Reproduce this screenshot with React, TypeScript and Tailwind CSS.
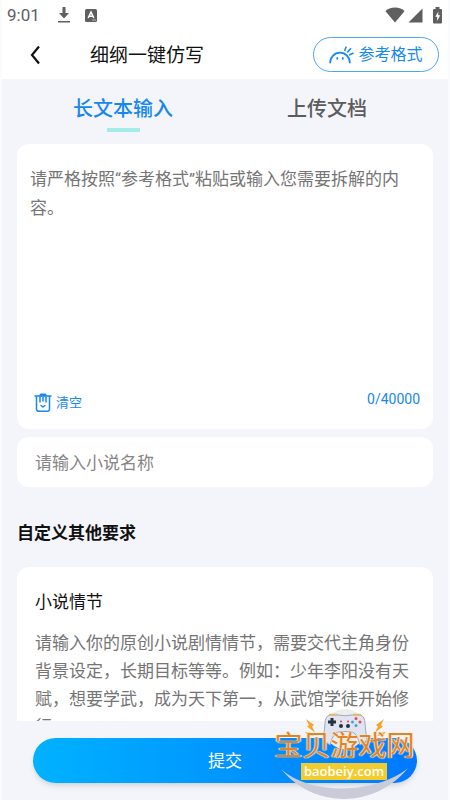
import React from 'react';

interface TabItem {
    id: string;
    label: string;
}

const tabs: TabItem[] = [
    { id: 'text', label: '长文本输入' },
    { id: 'file', label: '上传文档' },
];

const MAX_LENGTH = 40000;

const StatusBar = () => (
    <div className="flex h-[30px] items-center justify-between bg-white pl-[5px] pr-1.5 text-[#5f5f5f]">
        <div className="flex items-center">
            <span className="w-[50px] text-[17px] leading-[30px]">9:01</span>
            <svg width="14" height="18" viewBox="0 0 14 18" className="mr-3.5" fill="currentColor">
                <path d="M5.500 1h3v6h3.500L7 12.500 2 7h3.500z" />
                <path d="M1 15h12v1.500H1z" />
            </svg>
            <svg width="12" height="14" viewBox="0 0 12 14">
                <rect width="12" height="13" y="1" rx="1.500" fill="currentColor" />
                <path d="M3.200 10 6 4l2.800 6M4.200 8.300h3.600" fill="none" stroke="#fff" strokeWidth="1.500" />
                <path d="M7 12h4" stroke="#bbb" />
            </svg>
        </div>
        <div className="flex items-center">
            <svg width="20" height="16" viewBox="0 0 20 16" className="mr-[3px]" fill="currentColor">
                <path d="M.5 4.200C2.500 1.700 6 .5 10 .5s7.500 1.200 9.500 3.700L10 15.500z" />
            </svg>
            <svg width="15" height="15" viewBox="0 0 15 15" className="mr-2.5" fill="currentColor">
                <path d="M14.500.5v14H.5z" />
            </svg>
            <svg width="9" height="17" viewBox="0 0 9 17">
                <path d="M2.500 0h4v2H8a1 1 0 0 1 1 1v12.500a1 1 0 0 1-1 1H1a1 1 0 0 1-1-1V3a1 1 0 0 1 1-1h1.500z" fill="currentColor" />
                <path d="M5.300 4.500 2.300 9.800h1.900V14l3-5.700H5.300z" fill="#fff" />
            </svg>
        </div>
    </div>
);

const SunriseIcon = () => (
    <svg width="25" height="18" viewBox="0 0 25 18" className="shrink-0" fill="none" stroke="currentColor" strokeWidth="1.800" strokeLinecap="round">
        <path d="M1.200 16.500a9.800 9.800 0 0 1 19.600 0" />
        <path d="M15.800 4.200 17 1.200M18.600 6 21.600 2.800M20.800 8.800l3.200-1.500" strokeWidth="1.600" />
        <path d="M8.300 12v.8M13.800 12v.8" />
    </svg>
);

const TrashIcon = () => (
    <svg width="18" height="20" viewBox="0 0 18 20" className="shrink-0" fill="none" stroke="currentColor" strokeWidth="1.500" strokeLinecap="round" strokeLinejoin="round">
        <path d="M1 3h16" />
        <path d="M6 2.500 6.800 1.200h4.400l.8 1.300z" fill="currentColor" />
        <path d="M2.500 3.500V16a2.300 2.300 0 0 0 2.300 2.300h8.400a2.300 2.300 0 0 0 2.300-2.300V3.500" />
        <path d="M6 4v5M9 4v4M12 4v5" />
        <path d="M7 12.500 9 14l2-1.500" />
    </svg>
);

const Watermark = () => (
    <div className="pointer-events-none absolute bottom-0 right-[33px] h-[96px] w-[141px]">
        <svg width="141" height="96" viewBox="0 0 141 96" className="absolute inset-0">
            <circle cx="71" cy="25" r="20" fill="#ecedef" />
            <path d="M7 65c33 40 94 40 127-1-30 25-96 29-127 1z" fill="#c9cbd9" />
            {/* Gamepad */}
            <path d="M56 11h8q7 1.500 14 0h8q5 1 5 9 1 10 2 16l-7 5q-3-12-8-13-7-1-14 0-5 1-8 13l-7-5q1-6 2-16 0-8 5-9z" fill="#e1e3f0" stroke="#a3a7bd" />
            <path d="M55 10.500h8M79 10.500h8" stroke="#f0b64a" strokeWidth="1.500" />
            <path d="M58 14v8M54 18h8" stroke="#263240" strokeWidth="3" />
            <circle cx="67" cy="22" r="2" fill="#26303c" />
            <circle cx="74" cy="22" r="2" fill="#26303c" />
            <circle cx="67" cy="17.500" r="1" fill="#d6453f" />
            <circle cx="74" cy="17.500" r="1" fill="#d6453f" />
            <circle cx="82" cy="14.500" r="1.500" fill="#e24b5a" />
            <circle cx="86" cy="18" r="1.500" fill="#e24b5a" />
            <circle cx="82" cy="21.500" r="1.500" fill="#3ba7d8" />
            <circle cx="78.500" cy="18" r="1.500" fill="#3ba7d8" />
            <path d="m32 15 8 6-2 1.500 3 6-8-6 2-1.500zM110 15l-8 6 2 1.500-3 6 8-6-2-1.500zM31 28l6 1 3 3-6-1zM112 28l-6 1-3 3 6-1z" fill="#f5a623" />
        </svg>
        <div className="absolute inset-x-0 top-[29px] text-center text-[28px] leading-7 text-[#e08425] [text-shadow:0_0_1px_#fff,1px_0_1px_#f6dfc0,-1px_0_1px_#f6dfc0]">
            宝贝游戏网
        </div>
        <div className="absolute left-[27px] top-[59px] h-[17px] w-[86px] bg-[#f2cb2e] text-center font-['Open_Sans'] text-[13px] leading-4 font-semibold text-white">
            baobeiy.com
        </div>
    </div>
);

export default function App() {
    const [activeTab, setActiveTab] = React.useState('text');
    const [content, setContent] = React.useState('');

    return (
        <div className="relative flex h-screen flex-col overflow-hidden border-x-2 border-[#fafbfd] bg-[#f4f5fa] font-[Roboto,'Noto_Sans_CJK_SC',sans-serif]">
            <StatusBar />

            <header className="flex h-[49px] items-center bg-white pl-[26px] pr-[9px]">
                <button type="button" aria-label="返回" className="w-[62px]">
                    <svg width="14" height="20" viewBox="0 0 14 20" fill="none" stroke="#111" strokeWidth="2.200">
                        <path d="M11 1.500 4 10l7 8.500" />
                    </svg>
                </button>
                <h1 className="pt-0.5 text-[19px] leading-7 text-[#111]">细纲一键仿写</h1>
                <button type="button" className="ml-auto flex h-[35px] w-[126px] items-center justify-center gap-1 rounded-full border border-[#4da5f5] text-base text-[#1688f0]">
                    <SunriseIcon />
                    参考格式
                </button>
            </header>

            <main className="min-h-0 flex-1 overflow-hidden px-[15px]">
                {/* Tabs */}
                <div className="grid h-[65px] grid-cols-2 items-start px-1 pt-[15px]">
                    {tabs.map((tab) => (
                        <button
                            key={tab.id}
                            type="button"
                            onClick={() => setActiveTab(tab.id)}
                            className={`flex flex-col items-center text-xl leading-[30px] font-medium ${activeTab === tab.id ? 'text-[#1688f0]' : 'text-[#5c5c5c]'}`}
                        >
                            {tab.label}
                            {activeTab === tab.id && <span className="mt-1 h-1 w-[33px] bg-[#a5ece9]" />}
                        </button>
                    ))}
                </div>

                {/* Long text */}
                <section className="rounded-xl bg-white">
                    <textarea
                        aria-label="长文本输入"
                        value={content}
                        maxLength={MAX_LENGTH}
                        onChange={(e) => setContent(e.target.value)}
                        placeholder="请严格按照“参考格式”粘贴或输入您需要拆解的内容。"
                        className="block h-[240px] w-full resize-none px-[13px] pt-[21px] text-[17px] leading-[29px] outline-none placeholder:text-[#757575]"
                    />
                    <div className="flex h-[45px] items-start justify-between pl-[17px] pr-[13px] text-[#1688f0]">
                        <button type="button" onClick={() => setContent('')} className="flex items-center gap-1 pt-[9px] text-[13px] leading-5">
                            <TrashIcon />
                            清空
                        </button>
                        <span className="pt-[5px] text-sm leading-5">{content.length}/{MAX_LENGTH}</span>
                    </div>
                </section>

                <input
                    type="text"
                    aria-label="小说名称"
                    placeholder="请输入小说名称"
                    className="mt-2 block h-[50px] w-full rounded-xl bg-white px-[18px] pt-0.5 text-[17px] outline-none placeholder:text-[#868686]"
                />

                <h2 className="mt-8 text-[17px] leading-7 font-bold text-[#111]">自定义其他要求</h2>

                <section className="mt-5 rounded-t-xl bg-white px-[18px] pt-[21px]">
                    <label htmlFor="plot" className="block text-[17px] leading-7 text-[#111]">小说情节</label>
                    <textarea
                        id="plot"
                        rows={6}
                        placeholder="请输入你的原创小说剧情情节，需要交代主角身份背景设定，长期目标等等。例如：少年李阳没有天赋，想要学武，成为天下第一，从武馆学徒开始修行。"
                        className="mt-[13px] block w-full resize-none overflow-hidden text-[17px] leading-7 outline-none placeholder:text-[#757575]"
                    />
                </section>
            </main>

            <footer className="h-[79px] px-[31px] pt-[17px]">
                <button type="button" className="h-[45px] w-full rounded-full bg-linear-to-r from-[#00b2ff] to-[#0078ff] pt-0.5 text-[17px] text-white shadow-md">
                    提交
                </button>
            </footer>

            <Watermark />
        </div>
    );
}
